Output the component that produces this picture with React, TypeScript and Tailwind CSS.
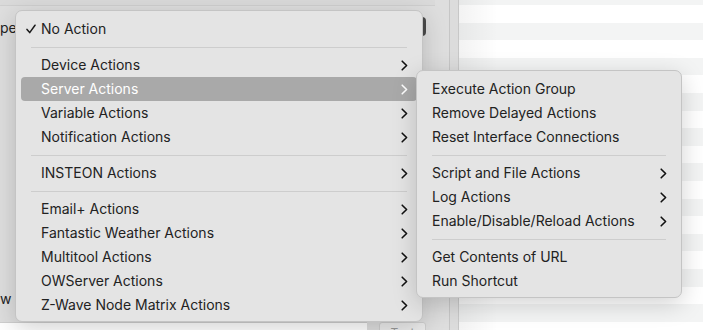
import React from 'react';

type Item = { label: string; sub?: boolean; checked?: boolean; active?: boolean } | 'sep';

const mainItems: Item[] = [
  { label: 'No Action', checked: true },
  'sep',
  { label: 'Device Actions', sub: true },
  { label: 'Server Actions', sub: true, active: true },
  { label: 'Variable Actions', sub: true },
  { label: 'Notification Actions', sub: true },
  'sep',
  { label: 'INSTEON Actions', sub: true },
  'sep',
  { label: 'Email+ Actions', sub: true },
  { label: 'Fantastic Weather Actions', sub: true },
  { label: 'Multitool Actions', sub: true },
  { label: 'OWServer Actions', sub: true },
  { label: 'Z-Wave Node Matrix Actions', sub: true },
];

const subItems: Item[] = [
  { label: 'Execute Action Group' },
  { label: 'Remove Delayed Actions' },
  { label: 'Reset Interface Connections' },
  'sep',
  { label: 'Script and File Actions', sub: true },
  { label: 'Log Actions', sub: true },
  { label: 'Enable/Disable/Reload Actions', sub: true },
  'sep',
  { label: 'Get Contents of URL' },
  { label: 'Run Shortcut' },
];

function Chevron({ white }: { white?: boolean }) {
  return (
    <svg width="7" height="11" viewBox="0 0 7 11" className="shrink-0">
      <path d="M1.2 1.2 L5.6 5.5 L1.2 9.8" fill="none" stroke={white ? '#ffffff' : '#111111'} strokeWidth="1.6" strokeLinecap="round" strokeLinejoin="round" />
    </svg>
  );
}

function Check() {
  return (
    <svg width="10" height="10" viewBox="0 0 10 10">
      <path d="M1 5.4 L3.7 8.6 L9 1.2" fill="none" stroke="#1a1a1a" strokeWidth="1.5" strokeLinecap="round" strokeLinejoin="round" />
    </svg>
  );
}

function MenuRows({ items, gutter }: { items: Item[]; gutter: string }) {
  return (
    <>
      {items.map((it, i) =>
        it === 'sep' ? (
          <div key={i} className="h-3 flex items-center px-[15px]">
            <div className="h-px w-full bg-[#cdcdcd]" />
          </div>
        ) : (
          <div
            key={i}
            className={`h-6 mx-[5px] rounded-[4px] flex items-center pr-[9px] ${it.active ? 'bg-[#a9a9a9] text-white' : 'text-[#222]'}`}
          >
            <span className={`${gutter} shrink-0 flex items-center pl-[5px]`}>{it.checked && <Check />}</span>
            <span className="flex-1 text-[14px] leading-none">{it.label}</span>
            {it.sub && <Chevron white={it.active} />}
          </div>
        )
      )}
    </>
  );
}

export default function App() {
  const stripes = Array.from({ length: 20 });
  return (
    <div className="relative w-[703px] h-[330px] overflow-hidden bg-[#dedede]" style={{ fontFamily: 'Inter, "Noto Sans", sans-serif' }}>
      {/* background window */}
      <div className="flex h-full">
        <div className="w-[449px] flex flex-col">
          <div className="h-[6px] border-b border-[#cfcfcf] bg-[#dadada] mr-[14px]" />
          <div className="flex-1 flex flex-col justify-between pt-[13px] pb-[14px]">
            <span className="text-[14px] text-[#222] leading-[18px]">pe</span>
            <span className="text-[14px] text-[#222] leading-[18px]">w</span>
          </div>
          <div className="h-[8px] flex">
            <div className="w-[367px] bg-white border-t border-[#cfcfcf]" />
            <div className="ml-[12px] w-[47px] h-[20px] bg-[#ececec] border border-[#cfcfcf] rounded-[3px] text-[12px] leading-[20px] text-center text-[#9a9a9a] overflow-hidden">Test</div>
          </div>
        </div>
        <div className="w-px bg-[#c6c6c6]" />
        <div className="w-[8px] bg-[#dcdcdc]" />
        <div className="w-px bg-[#d2d2d2]" />
        <div className="flex-1 flex flex-col bg-white">
          <div className="h-[5px] shrink-0 bg-[#f3f4f4]" />
          {stripes.map((_, i) => (
            <div key={i} className={`h-[17.6px] shrink-0 ${i % 2 === 0 ? 'bg-white' : 'bg-[#f3f4f4]'}`} />
          ))}
        </div>
      </div>

      {/* soft shadow near divider */}
      <div className="absolute left-[458px] top-0 w-[40px] h-full bg-gradient-to-r from-[#0000000d] to-transparent" />

      {/* popup button edge */}
      <div className="absolute left-[414px] top-[17px] w-[12px] h-[19px] rounded-[4px] bg-[#f5f5f5] border-r-[3px] border-[#4a4a4a]" />

      {/* main menu */}
      <div className="absolute left-[15px] top-[10px] w-[408px] h-[312px] rounded-[7px] bg-[#e4e4e4] border border-[#c4c4c4] shadow-[0_6px_24px_rgba(0,0,0,0.18)] pt-[6px] flex flex-col">
        <MenuRows items={mainItems} gutter="w-[20px]" />
      </div>

      {/* sub menu */}
      <div className="absolute left-[416px] top-[70px] w-[266px] h-[228px] rounded-[7px] bg-[#e4e4e4] border border-[#c4c4c4] shadow-[0_6px_24px_rgba(0,0,0,0.18)] pt-[6px] flex flex-col">
        <MenuRows items={subItems} gutter="w-[10px]" />
      </div>
    </div>
  );
}
